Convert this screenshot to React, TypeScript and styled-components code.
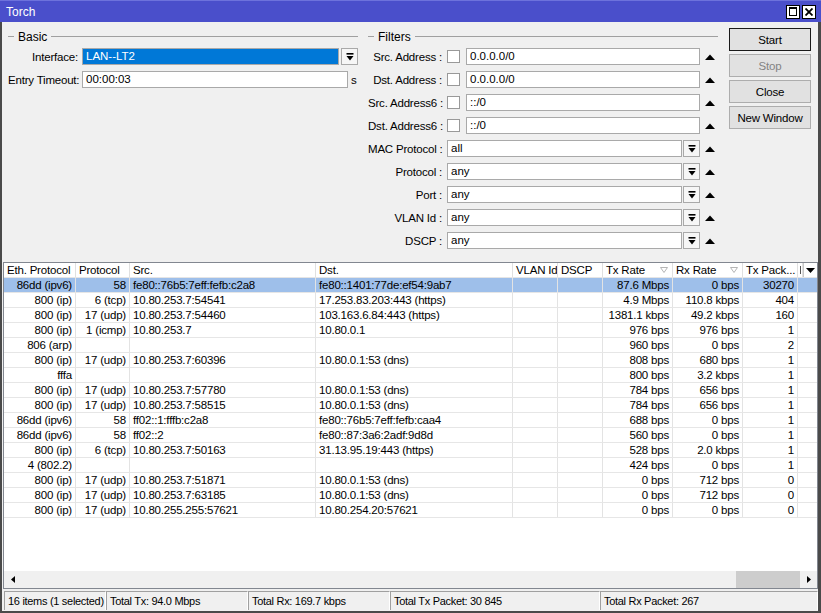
import React from 'react'
import styled, { createGlobalStyle, css } from 'styled-components'

const GlobalStyle = createGlobalStyle`
  html, body {
    margin: 0;
    padding: 0;
    background: #f0f0f0;
  }
  body {
    font-family: "Liberation Sans", Arial, sans-serif;
    font-size: 11px;
    color: #000;
  }
`

type Align = 'left' | 'right'

interface FlowRow {
  cells: string[]
  selected?: boolean
}

const columnAlign: Align[] = ['right', 'right', 'left', 'left', 'left', 'left', 'right', 'right', 'right']

const rows: FlowRow[] = [
  { cells: ['86dd (ipv6)', '58', 'fe80::76b5:7eff:fefb:c2a8', 'fe80::1401:77de:ef54:9ab7', '', '', '87.6 Mbps', '0 bps', '30270'], selected: true },
  { cells: ['800 (ip)', '6 (tcp)', '10.80.253.7:54541', '17.253.83.203:443 (https)', '', '', '4.9 Mbps', '110.8 kbps', '404'] },
  { cells: ['800 (ip)', '17 (udp)', '10.80.253.7:54460', '103.163.6.84:443 (https)', '', '', '1381.1 kbps', '49.2 kbps', '160'] },
  { cells: ['800 (ip)', '1 (icmp)', '10.80.253.7', '10.80.0.1', '', '', '976 bps', '976 bps', '1'] },
  { cells: ['806 (arp)', '', '', '', '', '', '960 bps', '0 bps', '2'] },
  { cells: ['800 (ip)', '17 (udp)', '10.80.253.7:60396', '10.80.0.1:53 (dns)', '', '', '808 bps', '680 bps', '1'] },
  { cells: ['fffa', '', '', '', '', '', '800 bps', '3.2 kbps', '1'] },
  { cells: ['800 (ip)', '17 (udp)', '10.80.253.7:57780', '10.80.0.1:53 (dns)', '', '', '784 bps', '656 bps', '1'] },
  { cells: ['800 (ip)', '17 (udp)', '10.80.253.7:58515', '10.80.0.1:53 (dns)', '', '', '784 bps', '656 bps', '1'] },
  { cells: ['86dd (ipv6)', '58', 'ff02::1:fffb:c2a8', 'fe80::76b5:7eff:fefb:caa4', '', '', '688 bps', '0 bps', '1'] },
  { cells: ['86dd (ipv6)', '58', 'ff02::2', 'fe80::87:3a6:2adf:9d8d', '', '', '560 bps', '0 bps', '1'] },
  { cells: ['800 (ip)', '6 (tcp)', '10.80.253.7:50163', '31.13.95.19:443 (https)', '', '', '528 bps', '2.0 kbps', '1'] },
  { cells: ['4 (802.2)', '', '', '', '', '', '424 bps', '0 bps', '1'] },
  { cells: ['800 (ip)', '17 (udp)', '10.80.253.7:51871', '10.80.0.1:53 (dns)', '', '', '0 bps', '712 bps', '0'] },
  { cells: ['800 (ip)', '17 (udp)', '10.80.253.7:63185', '10.80.0.1:53 (dns)', '', '', '0 bps', '712 bps', '0'] },
  { cells: ['800 (ip)', '17 (udp)', '10.80.255.255:57621', '10.80.254.20:57621', '', '', '0 bps', '0 bps', '0'] },
]

const filters: { label: string; value: string; kind: 'address' | 'select' }[] = [
  { label: 'Src. Address :', value: '0.0.0.0/0', kind: 'address' },
  { label: 'Dst. Address :', value: '0.0.0.0/0', kind: 'address' },
  { label: 'Src. Address6 :', value: '::/0', kind: 'address' },
  { label: 'Dst. Address6 :', value: '::/0', kind: 'address' },
  { label: 'MAC Protocol :', value: 'all', kind: 'select' },
  { label: 'Protocol :', value: 'any', kind: 'select' },
  { label: 'Port :', value: 'any', kind: 'select' },
  { label: 'VLAN Id :', value: 'any', kind: 'select' },
  { label: 'DSCP :', value: 'any', kind: 'select' },
]

const COLS = '72px 54px 186px 197px 45px 45px 70px 70px 55px'

// icons

const DropIcon = () => (
  <svg width="8" height="8" viewBox="0 0 8 8">
    <rect x="0.5" y="0" width="7" height="1.6" fill="#000" />
    <polygon points="0.5,3 7.5,3 4,7.5" fill="#000" />
  </svg>
)

const UpIcon = () => (
  <svg width="10" height="6" viewBox="0 0 10 6">
    <polygon points="0,6 5,0.5 10,6" fill="#000" />
  </svg>
)

const SortIcon = () => (
  <svg width="8" height="6" viewBox="0 0 8 6">
    <polygon points="0.5,0.5 7.5,0.5 4,5.5" fill="none" stroke="#b5b5b5" strokeWidth="1" />
  </svg>
)

const TinyArrow = ({ dir }: { dir: 'left' | 'right' | 'down' }) => {
  if (dir === 'down') {
    return (
      <svg width="9" height="5" viewBox="0 0 9 5">
        <polygon points="0,0 9,0 4.5,5" fill="#000" />
      </svg>
    )
  }
  return (
    <svg width="4" height="7" viewBox="0 0 4 7">
      <polygon points={dir === 'left' ? '4,0 4,7 0,3.5' : '0,0 0,7 4,3.5'} fill="#000" />
    </svg>
  )
}

// window chrome

const Window = styled.div`
  width: 821px;
  height: 613px;
  display: flex;
  flex-direction: column;
  background: #f0f0f0;
  overflow: hidden;
`

const TitleBar = styled.div`
  height: 22px;
  flex: none;
  display: flex;
  align-items: center;
  background: #4a4fcb;
  border-top: 1px solid #6d72dc;
  box-sizing: border-box;
  padding: 0 5px 0 6px;
  color: #fff;
  font-size: 12px;
`

const TitleText = styled.span`
  flex: 1;
`

const TitleButton = styled.div`
  width: 14px;
  height: 14px;
  box-sizing: border-box;
  margin-left: 2px;
  background: #fff;
  border: 1px solid #000;
  display: flex;
  align-items: center;
  justify-content: center;
`

const Frame = styled.div`
  flex: 1;
  display: flex;
  flex-direction: column;
  border-left: 2px solid #4a4a4a;
  border-right: 3px solid #4a4a4a;
  border-bottom: 2px solid #4a4a4a;
  min-height: 0;
`

// top panel

const TopPanel = styled.div`
  height: 240px;
  flex: none;
  box-sizing: border-box;
  padding-top: 6px;
  display: flex;
  align-items: flex-start;
`

const Group = styled.div<{ $offset: number }>`
  width: 350px;
  margin-left: ${p => p.$offset}px;
  margin-top: 2px;
  display: flex;
  flex-direction: column;
`

const GroupHeader = styled.div`
  height: 13px;
  display: flex;
  align-items: center;
  gap: 4px;
  margin-bottom: 5px;
  font-size: 12px;

  &::before {
    content: '';
    width: 6px;
    border-top: 1px solid #a0a0a0;
  }
  &::after {
    content: '';
    flex: 1;
    border-top: 1px solid #a0a0a0;
  }
`

const Rows = styled.div`
  display: flex;
  flex-direction: column;
  gap: 6px;
`

const FieldRow = styled.div`
  height: 17px;
  display: flex;
  align-items: center;
`

const Label = styled.div<{ $width: number }>`
  width: ${p => p.$width}px;
  flex: none;
  text-align: right;
  white-space: nowrap;
  font-size: 11.5px;
  letter-spacing: -0.2px;
`

const Input = styled.div<{ $width: number; $selected?: boolean }>`
  width: ${p => p.$width}px;
  height: 17px;
  flex: none;
  box-sizing: border-box;
  border: 1px solid #a9a9a9;
  background: ${p => (p.$selected ? '#0078d7' : '#fff')};
  color: ${p => (p.$selected ? '#fff' : '#000')};
  padding-left: 3px;
  line-height: 15px;
  font-size: 11.5px;
  white-space: nowrap;
  overflow: hidden;
`

const DropButton = styled.div`
  width: 17px;
  height: 17px;
  flex: none;
  box-sizing: border-box;
  margin-left: 1px;
  border: 1px solid #a9a9a9;
  background: #f6f6f6;
  display: flex;
  align-items: center;
  justify-content: center;
`

const Check = styled.div`
  width: 13px;
  height: 13px;
  flex: none;
  box-sizing: border-box;
  border: 1px solid #999;
  background: #fff;
  margin-right: 6px;
`

const Unit = styled.span`
  margin-left: 3px;
  font-size: 11.5px;
`

const Controls = styled.div`
  width: 253px;
  flex: none;
  display: flex;
  align-items: center;
`

const Toggle = styled.div`
  width: 18px;
  display: flex;
  justify-content: flex-end;
  padding-right: 3px;
  box-sizing: border-box;
`

const ButtonColumn = styled.div`
  width: 82px;
  margin-left: 11px;
  display: flex;
  flex-direction: column;
  gap: 3px;
`

const Button = styled.div<{ $default?: boolean; $disabled?: boolean }>`
  height: 23px;
  box-sizing: border-box;
  border: 1px solid ${p => (p.$default ? '#1a1a1a' : '#adadad')};
  background: #e1e1e1;
  color: ${p => (p.$disabled ? '#838383' : '#000')};
  display: flex;
  align-items: center;
  justify-content: center;
  font-size: 11.5px;
  letter-spacing: -0.2px;
`

// table

const Table = styled.div`
  flex: 1;
  min-height: 0;
  margin-left: 1px;
  border: 1px solid #828790;
  background: #fff;
  display: flex;
  flex-direction: column;
`

const HeaderRow = styled.div`
  height: 15px;
  flex: none;
  box-sizing: border-box;
  display: grid;
  grid-template-columns: ${COLS} 5px 1fr;
  border-bottom: 1px solid #e5e5e5;
`

const HeaderCell = styled.div`
  display: flex;
  align-items: center;
  justify-content: space-between;
  padding: 0 4px 0 3px;
  border-right: 1px solid #e0e0e0;
  white-space: nowrap;
  overflow: hidden;
  font-size: 11.5px;
  letter-spacing: -0.2px;
`

const HeaderSliver = styled.div`
  border-right: 1px solid #e0e0e0;
  position: relative;

  &::before {
    content: '';
    position: absolute;
    left: 2px;
    top: 3px;
    height: 8px;
    border-left: 1px solid #555;
  }
`

const HeaderMenu = styled.div`
  display: flex;
  align-items: center;
  justify-content: center;
  border-left: 1px solid #c8c8c8;
`

const Body = styled.div`
  flex: 1;
  min-height: 0;
`

const DataRow = styled.div<{ $selected?: boolean }>`
  height: 15px;
  box-sizing: border-box;
  display: grid;
  grid-template-columns: ${COLS} 1fr;
  border-bottom: 1px solid #e6e6e6;
  ${p =>
    p.$selected &&
    css`
      background: #9ebfea;
    `}
`

const Cell = styled.div<{ $align: Align }>`
  text-align: ${p => p.$align};
  padding: 0 3px 0 3px;
  border-right: 1px solid #e3e3e3;
  line-height: 14px;
  white-space: nowrap;
  overflow: hidden;
  font-size: 11.5px;
  letter-spacing: -0.2px;
`

const Filler = styled.div``

const ScrollBar = styled.div`
  height: 17px;
  flex: none;
  display: flex;
  background: #f0f0f0;
`

const ScrollArrow = styled.div`
  width: 17px;
  display: flex;
  align-items: center;
  justify-content: center;
`

const ScrollTrack = styled.div`
  flex: 1;
  display: flex;
  justify-content: flex-end;
`

const ScrollThumb = styled.div`
  width: 64px;
  background: #cdcdcd;
`

// status bar

const StatusBar = styled.div`
  height: 22px;
  flex: none;
  box-sizing: border-box;
  padding: 2px 0 1px 2px;
  display: flex;
`

const StatusCell = styled.div<{ $width?: number }>`
  ${p => (p.$width ? `width: ${p.$width}px;` : 'flex: 1;')}
  flex-shrink: 0;
  box-sizing: border-box;
  border-top: 1px solid #a0a0a0;
  border-left: 1px solid #a0a0a0;
  border-right: 1px solid #fff;
  padding-left: 3px;
  line-height: 18px;
  white-space: nowrap;
  overflow: hidden;
  font-size: 11px;
  letter-spacing: -0.3px;
`

export default function App() {
  return (
    <>
      <GlobalStyle />
      <Window>
        <TitleBar>
          <TitleText>Torch</TitleText>
          <TitleButton>
            <svg width="8" height="9" viewBox="0 0 8 9">
              <rect x="0.5" y="0.5" width="7" height="8" fill="none" stroke="#000" />
              <rect x="0" y="0" width="8" height="2" fill="#000" />
            </svg>
          </TitleButton>
          <TitleButton>
            <svg width="8" height="8" viewBox="0 0 8 8">
              <path d="M0.5 0.5 L7.5 7.5 M7.5 0.5 L0.5 7.5" stroke="#000" strokeWidth="1.8" />
            </svg>
          </TitleButton>
        </TitleBar>
        <Frame>
          <TopPanel>
            <Group $offset={6}>
              <GroupHeader>Basic</GroupHeader>
              <Rows>
                <FieldRow>
                  <Label $width={70}>Interface:</Label>
                  <Input $width={257} $selected style={{ marginLeft: 4 }}>LAN--LT2</Input>
                  <DropButton style={{ marginLeft: 2 }}>
                    <DropIcon />
                  </DropButton>
                </FieldRow>
                <FieldRow>
                  <Label $width={70}>Entry Timeout:</Label>
                  <Input $width={266} style={{ marginLeft: 4 }}>00:00:03</Input>
                  <Unit>s</Unit>
                </FieldRow>
              </Rows>
            </Group>
            <Group $offset={10}>
              <GroupHeader>Filters</GroupHeader>
              <Rows>
                {filters.map(f => (
                  <FieldRow key={f.label}>
                    <Label $width={74}>{f.label}</Label>
                    <Controls style={{ marginLeft: 5 }}>
                      {f.kind === 'address' ? (
                        <>
                          <Check />
                          <Input $width={234}>{f.value}</Input>
                        </>
                      ) : (
                        <>
                          <Input $width={235}>{f.value}</Input>
                          <DropButton>
                            <DropIcon />
                          </DropButton>
                        </>
                      )}
                    </Controls>
                    <Toggle>
                      <UpIcon />
                    </Toggle>
                  </FieldRow>
                ))}
              </Rows>
            </Group>
            <ButtonColumn>
              <Button $default>Start</Button>
              <Button $disabled>Stop</Button>
              <Button>Close</Button>
              <Button>New Window</Button>
            </ButtonColumn>
          </TopPanel>

          <Table>
            <HeaderRow>
              <HeaderCell>Eth. Protocol</HeaderCell>
              <HeaderCell>Protocol</HeaderCell>
              <HeaderCell>Src.</HeaderCell>
              <HeaderCell>Dst.</HeaderCell>
              <HeaderCell>VLAN Id</HeaderCell>
              <HeaderCell>DSCP</HeaderCell>
              <HeaderCell>
                Tx Rate <SortIcon />
              </HeaderCell>
              <HeaderCell>
                Rx Rate <SortIcon />
              </HeaderCell>
              <HeaderCell>Tx Pack...</HeaderCell>
              <HeaderSliver />
              <HeaderMenu>
                <TinyArrow dir="down" />
              </HeaderMenu>
            </HeaderRow>
            <Body>
              {rows.map((r, i) => (
                <DataRow key={i} $selected={r.selected}>
                  {r.cells.map((c, j) => (
                    <Cell key={j} $align={columnAlign[j]}>
                      {c}
                    </Cell>
                  ))}
                  <Filler />
                </DataRow>
              ))}
            </Body>
            <ScrollBar>
              <ScrollArrow>
                <TinyArrow dir="left" />
              </ScrollArrow>
              <ScrollTrack>
                <ScrollThumb />
              </ScrollTrack>
              <ScrollArrow>
                <TinyArrow dir="right" />
              </ScrollArrow>
            </ScrollBar>
          </Table>

          <StatusBar>
            <StatusCell $width={102}>16 items (1 selected)</StatusCell>
            <StatusCell $width={142}>Total Tx: 94.0 Mbps</StatusCell>
            <StatusCell $width={142}>Total Rx: 169.7 kbps</StatusCell>
            <StatusCell $width={210}>Total Tx Packet: 30 845</StatusCell>
            <StatusCell>Total Rx Packet: 267</StatusCell>
          </StatusBar>
        </Frame>
      </Window>
    </>
  )
}
